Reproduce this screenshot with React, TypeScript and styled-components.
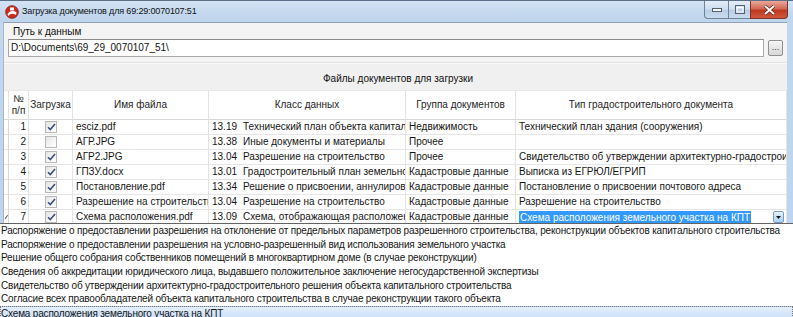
import React from "react";
import styled, { createGlobalStyle, css } from "styled-components";

const Global = createGlobalStyle`
  html, body { margin: 0; padding: 0; background: #ffffff; }
  body { font-family: "Liberation Sans", Arial, sans-serif; }
  * { box-sizing: border-box; }
`;

const COLS = "5px 20px 44px 136px 197px 110px 1fr";

const Screen = styled.div`
  position: relative;
  width: 793px;
  height: 317px;
  overflow: hidden;
  background: #ffffff;
`;

const Window = styled.div`
  display: flex;
  flex-direction: column;
  width: 793px;
  height: 317px;
  background: linear-gradient(180deg, #c3d8ee 0%, #bcd3ec 100%);
  border-top: 1px solid #5b6f86;
`;

const TitleBar = styled.div`
  display: flex;
  align-items: flex-start;
  height: 21px;
  padding-left: 5px;
  background: linear-gradient(180deg, #d3e3f4 0%, #c3d8ee 60%, #bfd5ec 100%);
`;

const AppIcon = styled.svg`
  width: 14px;
  height: 14px;
  margin-top: 4px;
  flex: none;
`;

const Title = styled.div`
  margin-left: 3px;
  margin-top: 5px;
  font-family: "Liberation Sans", Arial, sans-serif;
  font-size: 9px;
  letter-spacing: -0.15px;
  color: #111;
  flex: 1;
`;

const Controls = styled.div`
  display: flex;
  margin-right: 5px;
`;

const CtrlBtn = styled.div<{ $kind: "min" | "max" | "close" }>`
  height: 18px;
  display: flex;
  align-items: center;
  justify-content: center;
  border: 1px solid #6f8299;
  border-top: none;
  ${(p) =>
    p.$kind === "close"
      ? css`
          width: 38px;
          background: linear-gradient(180deg, #e9a99b 0%, #d46a55 45%, #c0391f 55%, #d0573d 100%);
          border-radius: 0 0 4px 0;
          border-color: #7b3528;
        `
      : css`
          width: ${p.$kind === "min" ? 24 : 22}px;
          background: linear-gradient(180deg, #e3edf8 0%, #cfdff0 45%, #b8cde6 55%, #c9dbef 100%);
          border-right: none;
          ${p.$kind === "min" ? "border-radius: 0 0 0 4px;" : ""}
        `}
`;

const Body = styled.div`
  flex: 1;
  margin: 0 6px 0 3px;
  background: #f0f0f0;
  border-top: 1px solid #8ea2b9;
  border-left: 1px solid #a8b8ca;
  display: flex;
  flex-direction: column;
`;

const PathGroup = styled.div`
  display: flex;
  flex-direction: column;
  padding: 3px 4px 0 4px;
  height: 40px;
  border-bottom: 1px solid #e2e2e2;
  background: #f4f4f4;
`;

const GroupLabel = styled.div`
  font-size: 10px;
  color: #111;
  padding-left: 5px;
  height: 12px;
  line-height: 12px;
`;

const PathRow = styled.div`
  display: flex;
  align-items: center;
  gap: 4px;
  margin-top: 1px;
`;

const PathInput = styled.div`
  flex: none;
  width: 756px;
  height: 18px;
  background: #fff;
  border: 1px solid #a9a9a9;
  border-top-color: #8a8a8a;
  font-size: 10px;
  line-height: 16px;
  padding-left: 2px;
  color: #111;
`;

const BrowseButton = styled.div`
  width: 16px;
  height: 16px;
  border: 1px solid #8e8f8f;
  border-radius: 2px;
  background: linear-gradient(180deg, #f6f6f6 0%, #e6e6e6 50%, #d9d9d9 100%);
  font-size: 9px;
  line-height: 12px;
  text-align: center;
  color: #333;
`;

const FilesCaption = styled.div`
  height: 27px;
  padding-top: 9px;
  padding-left: 319px;
  font-size: 10px;
  color: #111;
  border-top: 1px solid #fafafa;
`;

const Grid = styled.div`
  display: grid;
  grid-template-columns: ${COLS};
  background: #fff;
  font-size: 10px;
  color: #151515;
`;

const HeadCell = styled.div`
  height: 30px;
  display: flex;
  align-items: center;
  justify-content: center;
  text-align: center;
  line-height: 12px;
  border-right: 1px solid #e3e3e3;
  border-bottom: 1px solid #d8d8d8;
  border-top: 1px solid #e8e8e8;
  background: #fff;
  color: #1e1e1e;
  overflow: hidden;
  white-space: nowrap;
`;

const Cell = styled.div<{ $align?: "left" | "right" | "center" }>`
  height: 15px;
  line-height: 14px;
  padding: 0 2px 0 3px;
  border-right: 1px solid #e3e3e3;
  border-bottom: 1px solid #e6e6e6;
  overflow: hidden;
  white-space: nowrap;
  display: flex;
  align-items: center;
  justify-content: ${(p) =>
    p.$align === "right" ? "flex-end" : p.$align === "center" ? "center" : "flex-start"};
`;

const Indicator = styled.div`
  height: 15px;
  border-right: 1px solid #d8d8d8;
  border-bottom: 1px solid #e6e6e6;
  display: flex;
  align-items: center;
  overflow: hidden;
`;

const Code = styled.span`
  display: inline-block;
  width: 31px;
  flex: none;
`;

const Selected = styled.span`
  background: #3399ff;
  color: #fff;
  padding: 0 1px;
  line-height: 13px;
`;

const ComboCell = styled(Cell)`
  justify-content: space-between;
  padding-right: 2px;
`;

const ComboButton = styled.div`
  width: 11px;
  height: 12px;
  border: 1px solid #7c9ac0;
  border-radius: 2px;
  background: linear-gradient(180deg, #eaf4fd 0%, #c6e1f8 50%, #a9d1f4 100%);
  display: flex;
  align-items: center;
  justify-content: center;
`;

const Box = styled.div`
  width: 12px;
  height: 12px;
  border: 1px solid #b8b8b8;
  background: linear-gradient(135deg, #e4e4e4 0%, #f6f6f6 60%, #ffffff 100%);
  display: flex;
  align-items: center;
  justify-content: center;
`;

const DropList = styled.div`
  position: absolute;
  left: 0;
  top: 223px;
  width: 793px;
  background: #fff;
  border-top: 1px solid #646464;
  font-size: 10px;
  letter-spacing: -0.18px;
  color: #151515;
  z-index: 5;
`;

const DropItem = styled.div<{ $active?: boolean }>`
  height: 13.7px;
  line-height: 13px;
  padding-left: 1px;
  white-space: nowrap;
  ${(p) =>
    p.$active &&
    css`
      height: 16px;
      background: linear-gradient(180deg, #e6f0fb 0%, #d3e5fa 50%, #c2dcf9 100%);
      border-top: 1px solid #a9c8ec;
      outline: 1px dotted #777;
      outline-offset: -1px;
    `}
`;

type Row = {
  n: number;
  checked: boolean;
  file: string;
  code: string;
  cls: string;
  group: string;
  type: string;
  combo?: boolean;
};

const rows: Row[] = [
  { n: 1, checked: true, file: "esciz.pdf", code: "13.19", cls: "Технический план объекта капитального строительства", group: "Недвижимость", type: "Технический план здания (сооружения)" },
  { n: 2, checked: false, file: "АГР.JPG", code: "13.38", cls: "Иные документы и материалы", group: "Прочее", type: "" },
  { n: 3, checked: true, file: "АГР2.JPG", code: "13.04", cls: "Разрешение на строительство", group: "Прочее", type: "Свидетельство об утверждении архитектурно-градостроительного решения" },
  { n: 4, checked: true, file: "ГПЗУ.docx", code: "13.01", cls: "Градостроительный план земельного участка", group: "Кадастровые данные", type: "Выписка из ЕГРЮЛ/ЕГРИП" },
  { n: 5, checked: true, file: "Постановление.pdf", code: "13.34", cls: "Решение о присвоении, аннулировании адреса", group: "Кадастровые данные", type: "Постановление о присвоении почтового адреса" },
  { n: 6, checked: true, file: "Разрешение на строительство.pdf", code: "13.04", cls: "Разрешение на строительство", group: "Кадастровые данные", type: "Разрешение на строительство" },
  { n: 7, checked: true, file: "Схема расположения.pdf", code: "13.09", cls: "Схема, отображающая расположении объекта", group: "Кадастровые данные", type: "Схема расположения земельного участка на КПТ", combo: true },
];

const listItems = [
  "Распоряжение о предоставлении разрешения на отклонение от предельных параметров разрешенного строительства, реконструкции объектов капитального строительства",
  "Распоряжение о предоставлении разрешения на условно-разрешенный вид использования земельного участка",
  "Решение общего собрания собственников помещений в многоквартирном доме (в случае реконструкции)",
  "Сведения об аккредитации юридического лица, выдавшего положительное заключение негосударственной экспертизы",
  "Свидетельство об утверждении архитектурно-градостроительного решения объекта капитального строительства",
  "Согласие всех правообладателей объекта капитального строительства в случае реконструкции такого объекта",
  "Схема расположения земельного участка на КПТ",
];

const Check = ({ checked }: { checked: boolean }) => (
  <Box>
    {checked && (
      <svg width="9" height="8" viewBox="0 0 9 8">
        <path d="M1 4.2 L3.3 6.5 L8 1" fill="none" stroke="#3c4f80" strokeWidth="1.6" />
      </svg>
    )}
  </Box>
);

const Pencil = () => (
  <svg width="6" height="8" viewBox="0 0 6 8">
    <path d="M5 1 L1.5 6 L1 7.5 L2.3 6.7 L5.8 1.7 Z" fill="#222" />
  </svg>
);

export default function App() {
  return (
    <Screen>
      <Global />
      <Window>
        <TitleBar>
          <AppIcon viewBox="0 0 14 14">
            <circle cx="7" cy="7" r="6.3" fill="#d42a1e" />
            <path d="M2.5 9.5 C4 6 8 5 11.5 7.5 L11 10 C8 8 5 8.5 3.5 11 Z" fill="#ffffff" />
            <rect x="5" y="2.5" width="4" height="3" fill="#ffffff" />
            <circle cx="7" cy="7" r="6.3" fill="none" stroke="#7a1a12" strokeWidth="0.8" />
          </AppIcon>
          <Title>Загрузка документов для 69:29:0070107:51</Title>
          <Controls>
            <CtrlBtn $kind="min">
              <svg width="10" height="4" viewBox="0 0 10 4">
                <rect x="0.5" y="0.5" width="9" height="3" fill="#fff" stroke="#55606d" />
              </svg>
            </CtrlBtn>
            <CtrlBtn $kind="max">
              <svg width="10" height="9" viewBox="0 0 10 9">
                <rect x="0.5" y="0.5" width="9" height="8" fill="none" stroke="#55606d" />
                <rect x="2" y="2.5" width="6" height="4.5" fill="none" stroke="#fff" />
              </svg>
            </CtrlBtn>
            <CtrlBtn $kind="close">
              <svg width="13" height="10" viewBox="0 0 13 10">
                <path d="M2 1 L11 9 M11 1 L2 9" stroke="#5a1a10" strokeWidth="3.2" />
                <path d="M2 1 L11 9 M11 1 L2 9" stroke="#ffffff" strokeWidth="2" />
              </svg>
            </CtrlBtn>
          </Controls>
        </TitleBar>
        <Body>
          <PathGroup>
            <GroupLabel>Путь к данным</GroupLabel>
            <PathRow>
              <PathInput>D:\Documents\69_29_0070107_51\</PathInput>
              <BrowseButton>...</BrowseButton>
            </PathRow>
          </PathGroup>
          <FilesCaption>Файлы документов для загрузки</FilesCaption>
          <Grid>
            <HeadCell />
            <HeadCell>
              №
              <br />
              п/п
            </HeadCell>
            <HeadCell>Загрузка</HeadCell>
            <HeadCell>Имя файла</HeadCell>
            <HeadCell>Класс данных</HeadCell>
            <HeadCell>Группа документов</HeadCell>
            <HeadCell>Тип градостроительного документа</HeadCell>
            {rows.map((r) => (
              <React.Fragment key={r.n}>
                <Indicator>{r.combo && <Pencil />}</Indicator>
                <Cell $align="right">{r.n}</Cell>
                <Cell $align="center">
                  <Check checked={r.checked} />
                </Cell>
                <Cell>{r.file}</Cell>
                <Cell>
                  <Code>{r.code}</Code>
                  {r.cls}
                </Cell>
                <Cell>{r.group}</Cell>
                {r.combo ? (
                  <ComboCell>
                    <Selected>{r.type}</Selected>
                    <ComboButton>
                      <svg width="5" height="3" viewBox="0 0 5 3">
                        <path d="M0 0 L5 0 L2.5 3 Z" fill="#1a1a1a" />
                      </svg>
                    </ComboButton>
                  </ComboCell>
                ) : (
                  <Cell>{r.type}</Cell>
                )}
              </React.Fragment>
            ))}
          </Grid>
        </Body>
      </Window>
      <DropList>
        {listItems.map((t, i) => (
          <DropItem key={i} $active={i === listItems.length - 1}>
            {t}
          </DropItem>
        ))}
      </DropList>
    </Screen>
  );
}
